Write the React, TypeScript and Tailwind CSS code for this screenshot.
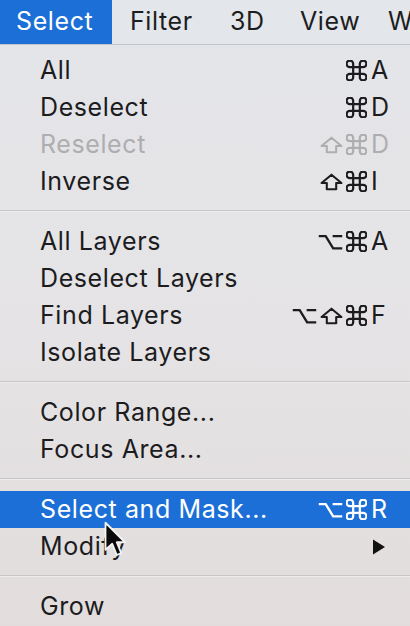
import React from "react";

type Item =
  | { type: "item"; label: string; mods?: string[]; key?: string; disabled?: boolean; active?: boolean; submenu?: boolean }
  | { type: "sep" };

const items: Item[] = [
  { type: "item", label: "All", mods: ["cmd"], key: "A" },
  { type: "item", label: "Deselect", mods: ["cmd"], key: "D" },
  { type: "item", label: "Reselect", mods: ["shift", "cmd"], key: "D", disabled: true },
  { type: "item", label: "Inverse", mods: ["shift", "cmd"], key: "I" },
  { type: "sep" },
  { type: "item", label: "All Layers", mods: ["opt", "cmd"], key: "A" },
  { type: "item", label: "Deselect Layers" },
  { type: "item", label: "Find Layers", mods: ["opt", "shift", "cmd"], key: "F" },
  { type: "item", label: "Isolate Layers" },
  { type: "sep" },
  { type: "item", label: "Color Range..." },
  { type: "item", label: "Focus Area..." },
  { type: "sep" },
  { type: "item", label: "Select and Mask...", mods: ["opt", "cmd"], key: "R", active: true },
  { type: "item", label: "Modify", submenu: true },
  { type: "sep" },
  { type: "item", label: "Grow" },
];

function Mod({ kind }: { kind: string }) {
  if (kind === "cmd")
    return (
      <svg width="21" height="21" viewBox="2.5 2.5 19 19" fill="none" stroke="currentColor" strokeWidth="2" strokeLinecap="round" strokeLinejoin="round">
        <path d="M15 6v12a3 3 0 1 0 3-3H6a3 3 0 1 0 3 3V6a3 3 0 1 0-3 3h12a3 3 0 1 0-3-3" />
      </svg>
    );
  if (kind === "shift")
    return (
      <svg width="23" height="18" viewBox="0 0 22 17" fill="none" stroke="currentColor" strokeWidth="2" strokeLinejoin="round">
        <path d="M11 1.5 L20.5 9.5 H15.5 V15.5 H6.5 V9.5 H1.5 Z" />
      </svg>
    );
  return (
    <svg width="25" height="16" viewBox="0 0 23 15" fill="none" stroke="currentColor" strokeWidth="2.2">
      <path d="M0.5 2 H7 L14 13.5 H22.5 M13.5 2 H22.5" />
    </svg>
  );
}

function Row({ it }: { it: Extract<Item, { type: "item" }> }) {
  const color = it.active ? "text-white" : it.disabled ? "text-[#aeaeb0]" : "text-[#1c1c1e]";
  return (
    <div className={`flex h-[37px] items-center pl-[40px] pr-[19px] ${it.active ? "bg-[#1b6fd6]" : ""} ${color}`}>
      <span className="flex-1 whitespace-nowrap">{it.label}</span>
      {it.mods && (
        <div className="flex items-center">
          <span className="flex items-center justify-end gap-[3px]">
            {it.mods.map((m, i) => (
              <Mod key={i} kind={m} />
            ))}
          </span>
          <span className="ml-[4px] w-[20px]">{it.key}</span>
        </div>
      )}
      {it.submenu && (
        <svg width="14" height="16" viewBox="0 0 14 16" className="mr-[5px]">
          <path d="M1 0.5 L13 8 L1 15.5 Z" fill="#111" />
        </svg>
      )}
    </div>
  );
}

export default function App() {
  return (
    <div
      className="relative h-[626px] w-[410px] overflow-hidden text-[25px] tracking-[0.6px]"
      style={{ fontFamily: 'Inter, "Liberation Sans", sans-serif' }}
    >
      <div className="flex h-[45px] items-stretch whitespace-nowrap border-b border-[#c4c5c9] bg-[#e3e6eb] text-[#1c1d20]">
        <div className="flex w-[112px] shrink-0 items-center bg-[#1b6fd6] pl-[16px] text-white">Select</div>
        <div className="flex w-[100px] shrink-0 items-center pl-[18px]">Filter</div>
        <div className="flex w-[70px] shrink-0 items-center pl-[18px]">3D</div>
        <div className="flex w-[88px] shrink-0 items-center pl-[18px]">View</div>
        <div className="flex shrink-0 items-center pl-[18px]">W</div>
      </div>
      <div className="h-[581px] bg-gradient-to-b from-[#e4e5e9] via-[#e5e3e5] to-[#e2dddc] pt-[7px]">
        {items.map((it, i) =>
          it.type === "sep" ? (
            <div key={i} className="pt-[10px] pb-[11px]">
              <div className="h-[1px] bg-[#c6c5c7]" />
              <div className="h-[1px] bg-[#eeeced]" />
            </div>
          ) : (
            <Row key={i} it={it} />
          )
        )}
      </div>
      <svg className="absolute left-[104px] top-[521px]" width="24" height="38" viewBox="0 0 16 25">
        <path
          d="M1 1 L1 19 L5.5 15 L8.5 22.5 L11.5 21.2 L8.5 14 L14 14 Z"
          fill="#0a0a0a"
          stroke="#f4f4f4"
          strokeWidth="1.2"
          strokeLinejoin="round"
        />
      </svg>
    </div>
  );
}
